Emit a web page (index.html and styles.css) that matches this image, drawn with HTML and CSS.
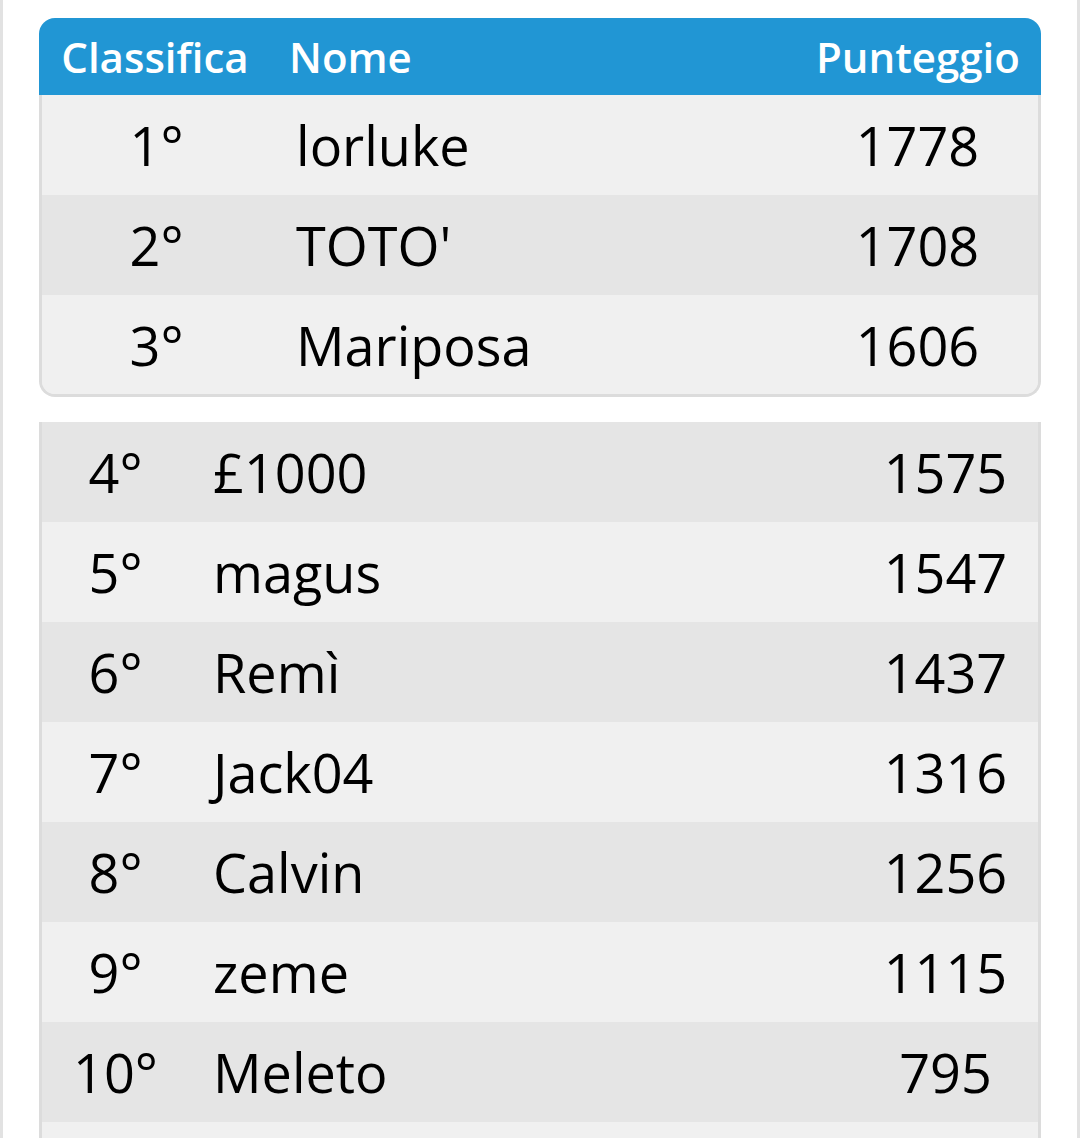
FILE: index.html
```html
<!DOCTYPE html>
<html lang="it">
<head>
<meta charset="utf-8">
<title>Classifica</title>
<link rel="stylesheet" href="styles.css">
</head>
<body>
<div class="page">
  <div class="podium">
    <div class="head">
      <div class="h-rank">Classifica</div>
      <div class="h-name">Nome</div>
      <div class="h-score">Punteggio</div>
    </div>
    <div class="podium-body">
      <div class="prow light"><div class="p-rank">1°</div><div class="p-name">lorluke</div><div class="p-score">1778</div></div>
      <div class="prow dark"><div class="p-rank">2°</div><div class="p-name">TOTO'</div><div class="p-score">1708</div></div>
      <div class="prow light"><div class="p-rank">3°</div><div class="p-name">Mariposa</div><div class="p-score">1606</div></div>
    </div>
  </div>
  <div class="rest">
    <div class="row dark"><div class="r-rank">4°</div><div class="r-name">£1000</div><div class="r-score">1575</div></div>
    <div class="row light"><div class="r-rank">5°</div><div class="r-name">magus</div><div class="r-score">1547</div></div>
    <div class="row dark"><div class="r-rank">6°</div><div class="r-name">Remì</div><div class="r-score">1437</div></div>
    <div class="row light"><div class="r-rank">7°</div><div class="r-name">Jack04</div><div class="r-score">1316</div></div>
    <div class="row dark"><div class="r-rank">8°</div><div class="r-name">Calvin</div><div class="r-score">1256</div></div>
    <div class="row light"><div class="r-rank">9°</div><div class="r-name">zeme</div><div class="r-score">1115</div></div>
    <div class="row dark"><div class="r-rank">10°</div><div class="r-name">Meleto</div><div class="r-score">795</div></div>
    <div class="row light"></div>
  </div>
</div>
</body>
</html>
```

FILE: styles.css
```css
html, body {
  margin: 0;
  padding: 0;
  background: #ffffff;
  overflow: hidden;
}
body {
  font-family: "Open Sans", "Noto Sans", sans-serif;
  color: #000;
}
.page {
  width: 1080px;
  height: 1138px;
  box-sizing: border-box;
  border-left: 3px solid #e2e2e2;
  border-right: 3px solid #e2e2e2;
  padding: 18px 36px 0 36px;
  overflow: hidden;
}
.podium {
  width: 1002px;
}
.head {
  display: grid;
  grid-template-columns: 232px 1fr 248px;
  height: 77px;
  align-items: center;
  background: #2196d4;
  color: #fff;
  border-radius: 16px 16px 0 0;
  font-weight: 600;
  font-size: 42px;
}
.h-rank { text-align: center; padding-top: 0; }
.h-name { padding-left: 18px; padding-top: 0; }
.h-score { text-align: center; padding-top: 0; padding-left: 2px; }
.podium-body {
  border: 3px solid #dcdcdc;
  border-top: none;
  border-radius: 0 0 16px 16px;
  overflow: hidden;
  height: 302px;
  box-sizing: border-box;
  background: #f0f0f0;
}
.prow {
  display: grid;
  grid-template-columns: 229px 1fr 245px;
  height: 100px;
  align-items: center;
  font-size: 54px;
}
.p-rank { text-align: center; padding-left: 0; }
.p-name { padding-left: 25px; }
.p-score { text-align: center; padding-left: 4px; }
.light { background: #f0f0f0; }
.dark { background: #e5e5e5; }
.rest {
  margin-top: 25px;
  width: 1002px;
  box-sizing: border-box;
  border-left: 3px solid #dcdcdc;
  border-right: 3px solid #dcdcdc;
}
.row {
  display: grid;
  grid-template-columns: 147px 1fr 187px;
  height: 100px;
  align-items: center;
  font-size: 54px;
}
.r-rank { text-align: center; padding-left: 0; }
.r-name { padding-left: 24px; }
.r-score { text-align: center; padding-left: 2px; }
```
